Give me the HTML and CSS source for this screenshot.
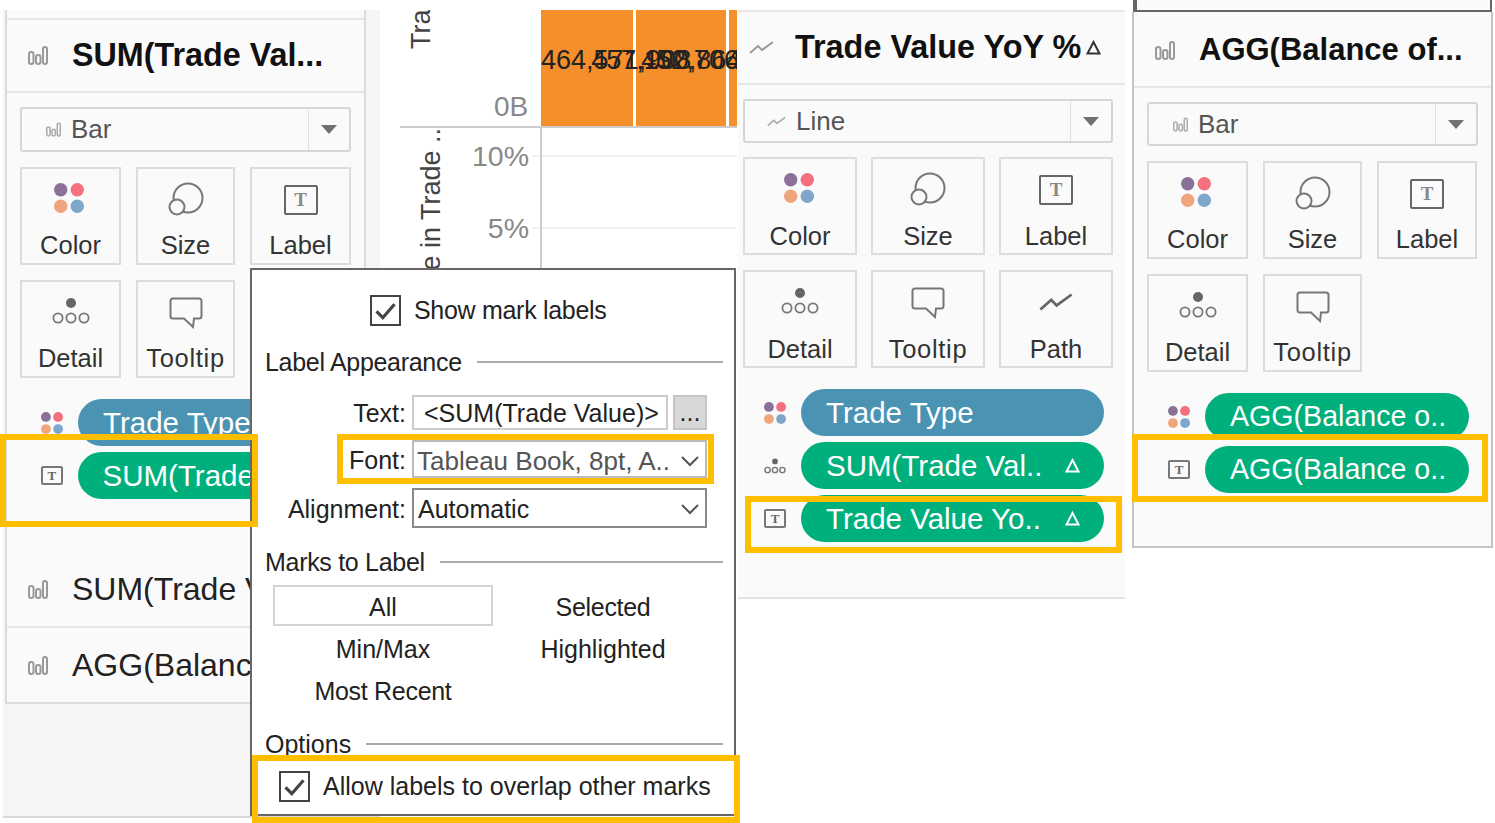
FILE: index.html
```html
<!DOCTYPE html>
<html lang="en">
  <head>
    <meta charset="UTF-8" />
    <title>Tableau mark labels</title>
    <link rel="stylesheet" href="styles.css">
  </head>
  <body>
    <svg class="defs" width="0" height="0">
      <symbol id="i-bar" viewBox="0 0 20 19">
        <rect x="1" y="6" width="4.500" height="12" rx="2.200" />
        <rect x="8" y="9" width="4.500" height="9" rx="2.200" />
        <rect x="15" y="1" width="4" height="17" rx="2" />
      </symbol>
      <symbol id="i-line" viewBox="0 0 25 13">
        <path d="M1 12 L9 5 L13 9 L24 1" />
      </symbol>
      <symbol id="i-color" viewBox="0 0 30 30">
        <circle cx="6.700" cy="6.700" r="6.700" fill="#8b7097" stroke="none" />
        <circle cx="23.300" cy="6.700" r="6.700" fill="#f4707f" stroke="none" />
        <circle cx="6.700" cy="23.300" r="6.700" fill="#f0a57c" stroke="none" />
        <circle cx="23.300" cy="23.300" r="6.700" fill="#7fa7cc" stroke="none" />
      </symbol>
      <symbol id="i-size" viewBox="0 0 36 34">
        <circle cx="20" cy="16" r="14.500" />
        <circle cx="9" cy="25" r="7.500" fill="#fafafa" />
      </symbol>
      <symbol id="i-detail" viewBox="0 0 38 28">
        <circle cx="19" cy="6" r="5" fill="#666" stroke="none" />
        <circle cx="6" cy="21" r="4.600" />
        <circle cx="19" cy="21" r="4.600" />
        <circle cx="32" cy="21" r="4.600" />
      </symbol>
      <symbol id="i-tip" viewBox="0 0 34 32">
        <path d="M4 1.500 H30 Q32.500 1.500 32.500 4 V19 Q32.500 21.500 30 21.500 H25 L24 30 L15 21.500 H4 Q1.500 21.500 1.500 19 V4 Q1.500 1.500 4 1.500 Z" />
      </symbol>
      <symbol id="i-delta" viewBox="0 0 15 15">
        <path d="M7.500 2 L13.500 13.500 H1.500 Z" />
      </symbol>
      <symbol id="i-chev" viewBox="0 0 18 11">
        <path d="M1 1 L9 9 L17 1" />
      </symbol>
      <symbol id="i-check" viewBox="0 0 30 30">
        <path d="M5 16 L12 23 L25 8" />
      </symbol>
    </svg>

    <div class="sidebar"></div>

    <section class="card card-a">
      <div class="card-head">
        <svg class="ico-bar"><use href="#i-bar" /></svg>
        <span>SUM(Trade Val...</span>
      </div>
      <div class="card-body">
        <div class="mark-select">
          <svg class="ico-bar-sm"><use href="#i-bar" /></svg>
          <span class="mark-name">Bar</span>
          <i class="caret"></i>
        </div>
        <div class="mark-grid">
          <div class="mark-btn"><svg class="ico-color"><use href="#i-color" /></svg><span>Color</span></div>
          <div class="mark-btn"><svg class="ico-size"><use href="#i-size" /></svg><span>Size</span></div>
          <div class="mark-btn"><b class="ico-label">T</b><span>Label</span></div>
          <div class="mark-btn"><svg class="ico-detail"><use href="#i-detail" /></svg><span>Detail</span></div>
          <div class="mark-btn"><svg class="ico-tip"><use href="#i-tip" /></svg><span>Tooltip</span></div>
        </div>
        <div class="pills">
          <div class="pill-row">
            <svg class="ico-color-sm"><use href="#i-color" /></svg>
            <div class="pill pill-blue">Trade Type</div>
          </div>
          <div class="pill-row">
            <b class="ico-label-sm">T</b>
            <div class="pill">SUM(Trade Value)</div>
          </div>
        </div>
      </div>
      <div class="card-row">
        <svg class="ico-bar"><use href="#i-bar" /></svg>
        <span>SUM(Trade Value)</span>
      </div>
      <div class="card-row">
        <svg class="ico-bar"><use href="#i-bar" /></svg>
        <span>AGG(Balance of Trade)</span>
      </div>
    </section>

    <section class="chart">
      <div class="chart-top">
        <div class="axis-title-top"><span>Trade Value</span></div>
        <div class="axis-zero">0B</div>
        <div class="bars">
          <div class="bar"></div>
          <div class="bar"></div>
          <div class="bar bar-end"></div>
          <div class="bar-labels">
            <span>464,571,908</span>
            <span>457,190,864</span>
            <span>452,706,693</span>
          </div>
        </div>
      </div>
      <div class="chart-lower">
        <div class="axis-title"><span>Change in Trade ..</span></div>
        <div class="ticks">
          <div class="tick"><span>10%</span><i></i></div>
          <div class="tick"><span>5%</span><i></i></div>
        </div>
      </div>
    </section>

    <section class="dialog">
      <div class="check-row check-show">
        <span class="check"><svg><use href="#i-check" /></svg></span>
        <span class="tight">Show mark labels</span>
      </div>
      <div class="group-title title-first"><span class="tight">Label Appearance</span><i></i></div>
      <div class="form">
        <label>Text:</label>
        <div class="text-ctrl">
          <div class="text-input">&lt;SUM(Trade Value)&gt;</div>
          <div class="dots">...</div>
        </div>
        <label>Font:</label>
        <div class="select select-font"><span>Tableau Book, 8pt, A..</span><svg><use href="#i-chev" /></svg></div>
        <label>Alignment:</label>
        <div class="select select-align"><span>Automatic</span><svg><use href="#i-chev" /></svg></div>
      </div>
      <div class="group-title title-marks"><span class="tight">Marks to Label</span><i></i></div>
      <div class="mark-opts">
        <div class="opt opt-on">All</div>
        <div class="opt tight">Selected</div>
        <div class="opt">Min/Max</div>
        <div class="opt">Highlighted</div>
        <div class="opt tight">Most Recent</div>
      </div>
      <div class="group-title"><span>Options</span><i></i></div>
      <div class="check-row check-overlap">
        <span class="check"><svg><use href="#i-check" /></svg></span>
        <span>Allow labels to overlap other marks</span>
      </div>
    </section>

    <section class="card card-b">
      <div class="card-head">
        <svg class="ico-line"><use href="#i-line" /></svg>
        <span>Trade Value YoY %</span>
        <svg class="ico-delta"><use href="#i-delta" /></svg>
      </div>
      <div class="card-body">
        <div class="mark-select">
          <svg class="ico-line-sm"><use href="#i-line" /></svg>
          <span class="mark-name">Line</span>
          <i class="caret"></i>
        </div>
        <div class="mark-grid">
          <div class="mark-btn"><svg class="ico-color"><use href="#i-color" /></svg><span>Color</span></div>
          <div class="mark-btn"><svg class="ico-size"><use href="#i-size" /></svg><span>Size</span></div>
          <div class="mark-btn"><b class="ico-label">T</b><span>Label</span></div>
          <div class="mark-btn"><svg class="ico-detail"><use href="#i-detail" /></svg><span>Detail</span></div>
          <div class="mark-btn"><svg class="ico-tip"><use href="#i-tip" /></svg><span>Tooltip</span></div>
          <div class="mark-btn"><svg class="ico-path"><use href="#i-line" /></svg><span>Path</span></div>
        </div>
        <div class="pills">
          <div class="pill-row">
            <svg class="ico-color-sm"><use href="#i-color" /></svg>
            <div class="pill pill-blue">Trade Type</div>
          </div>
          <div class="pill-row">
            <svg class="ico-detail-sm"><use href="#i-detail" /></svg>
            <div class="pill"><span>SUM(Trade Val..</span><svg class="pill-delta"><use href="#i-delta" /></svg></div>
          </div>
          <div class="pill-row">
            <b class="ico-label-sm">T</b>
            <div class="pill"><span>Trade Value Yo..</span><svg class="pill-delta"><use href="#i-delta" /></svg></div>
          </div>
        </div>
      </div>
    </section>

    <div class="window-edge"></div>

    <section class="card card-c">
      <div class="card-head">
        <svg class="ico-bar"><use href="#i-bar" /></svg>
        <span>AGG(Balance of...</span>
      </div>
      <div class="card-body">
        <div class="mark-select">
          <svg class="ico-bar-sm"><use href="#i-bar" /></svg>
          <span class="mark-name">Bar</span>
          <i class="caret"></i>
        </div>
        <div class="mark-grid">
          <div class="mark-btn"><svg class="ico-color"><use href="#i-color" /></svg><span>Color</span></div>
          <div class="mark-btn"><svg class="ico-size"><use href="#i-size" /></svg><span>Size</span></div>
          <div class="mark-btn"><b class="ico-label">T</b><span>Label</span></div>
          <div class="mark-btn"><svg class="ico-detail"><use href="#i-detail" /></svg><span>Detail</span></div>
          <div class="mark-btn"><svg class="ico-tip"><use href="#i-tip" /></svg><span>Tooltip</span></div>
        </div>
        <div class="pills">
          <div class="pill-row">
            <svg class="ico-color-sm"><use href="#i-color" /></svg>
            <div class="pill">AGG(Balance o..</div>
          </div>
          <div class="pill-row">
            <b class="ico-label-sm">T</b>
            <div class="pill">AGG(Balance o..</div>
          </div>
        </div>
      </div>
    </section>

    <div class="mark-box box-a"></div>
    <div class="mark-box box-font"></div>
    <div class="mark-box box-overlap"></div>
    <div class="mark-box box-b"></div>
    <div class="mark-box box-c"></div>
  </body>
</html>
```

FILE: styles.css
```css
* {
  margin: 0;
  padding: 0;
  box-sizing: border-box;
}
body {
  position: relative;
  width: 1495px;
  height: 823px;
  overflow: hidden;
  background: #fff;
  color: #333;
  font-family: "Liberation Sans", Arial, sans-serif;
}
.defs {
  position: absolute;
}
svg {
  display: block;
  flex: none;
  fill: none;
  stroke: #777;
  stroke-width: 2;
}

/* pieces of the collage */
.sidebar {
  position: absolute;
  left: 3px;
  top: 10px;
  width: 377px;
  height: 808px;
  background: #f5f5f5;
  border-bottom: 2px solid #d8d8d8;
}
.card {
  position: absolute;
  background: #fafafa;
}
.card-a {
  left: 5px;
  top: 10px;
  width: 361px;
  height: 694px;
  padding-top: 8px;
  border: 2px solid #dcdcdc;
  border-top: 0;
}
.card-b {
  left: 738px;
  top: 10px;
  width: 387px;
  height: 589px;
  border-top: 2px solid #e6e6e6;
  border-bottom: 2px solid #e2e2e2;
}
.card-c {
  left: 1132px;
  top: 12px;
  width: 361px;
  height: 536px;
  border: 2px solid #c4c4c4;
  border-top: 0;
}
.window-edge {
  position: absolute;
  left: 1133px;
  top: -4px;
  width: 359px;
  height: 16px;
  background: #fafafa;
  border: 2px solid #666;
  border-left-width: 4px;
}

/* card header */
.card-head,
.card-row {
  display: flex;
  align-items: center;
  height: 75px;
  border-top: 2px solid #e6e6e6;
  border-bottom: 2px solid #e6e6e6;
  font-size: 32px;
  color: #222;
}
.card-head {
  font-weight: bold;
  color: #111;
}
.card-row {
  border-top: 0;
  margin-top: 0;
  white-space: nowrap;
  overflow: hidden;
}
.card-row:last-child {
  border-bottom: 0;
}
.card-a .card-head,
.card-a .card-row {
  padding-left: 21px;
  gap: 24px;
}
.card-a .card-head {
  font-size: 32.300px;
}
.card-b .card-head {
  height: 73px;
  padding-left: 11px;
  gap: 21px;
  border-top: 0;
  font-size: 32.400px;
}
.card-c .card-head {
  height: 76px;
  padding-left: 21px;
  padding-top: 2px;
  gap: 24px;
  border-top: 0;
  font-size: 31px;
}
.ico-bar {
  width: 20px;
  height: 19px;
  stroke: #999;
}
.ico-line {
  width: 25px;
  height: 13px;
  stroke: #999;
}
.ico-delta {
  width: 15px;
  height: 15px;
  margin-left: -16px;
  stroke: #333;
}

/* card body */
.card-a .card-body {
  height: 460px;
  padding: 14px 13px 0;
}
.card-b .card-body {
  padding: 14px 12px 0 5px;
}
.card-c .card-body {
  padding: 14px 13px 0;
}
.mark-select {
  display: flex;
  align-items: center;
  height: 45px;
  background: #fafafa;
  border: 2px solid #d6d6d6;
  border-radius: 3px;
  color: #555;
  font-size: 26px;
}
.card-b .mark-select,
.card-c .mark-select {
  height: 44px;
}
.ico-bar-sm {
  width: 15px;
  height: 15px;
  margin-left: 24px;
  stroke: #aaa;
}
.ico-line-sm {
  width: 19px;
  height: 11px;
  margin-left: 22px;
  stroke: #aaa;
}
.mark-name {
  flex: 1;
  height: 100%;
  line-height: 41px;
  margin-left: 10px;
  border-right: 1px solid #e0e0e0;
}
.caret {
  width: 40px;
  display: flex;
  justify-content: center;
}
.caret::before {
  content: "";
  border-top: 9px solid #707070;
  border-left: 8px solid transparent;
  border-right: 8px solid transparent;
}
.mark-grid {
  display: grid;
  gap: 15px;
  margin-top: 15px;
}
.card-a .mark-grid {
  grid-template-columns: 101px 99px 101px;
  grid-auto-rows: 98px;
}
.card-b .mark-grid {
  gap: 15px 14px;
  margin-top: 14px;
  grid-template-columns: 114px 114px 114px;
  grid-auto-rows: 98px;
}
.card-c .mark-grid {
  grid-template-columns: 101px 99px 100px;
  grid-auto-rows: 98px;
}
.mark-btn {
  display: flex;
  flex-direction: column;
  align-items: center;
  border: 2px solid #dcdcdc;
  font-size: 25.500px;
  color: #333;
}
.mark-btn svg,
.mark-btn b {
  margin-top: 14px;
  height: 34px;
}
.mark-btn span {
  margin-top: auto;
  line-height: 30px;
  margin-bottom: 3px;
}
.card-b .mark-btn span {
  margin-bottom: 2px;
}
.mark-btn:nth-child(5) span {
  letter-spacing: 0.700px;
}
.mark-btn .ico-color {
  width: 30px;
  height: 30px;
  margin-left: -3px;
}
.mark-btn .ico-size {
  width: 36px;
  margin-top: 13px;
}
.mark-btn .ico-detail {
  width: 38px;
  height: 28px;
  margin-top: 15px;
  stroke-width: 1.800;
}
.mark-btn .ico-tip {
  width: 34px;
  height: 32px;
  margin-top: 15px;
}
.mark-btn .ico-path {
  width: 34px;
  height: 18px;
  margin-top: 21px;
  stroke: #666;
}
.mark-btn .ico-label {
  margin-top: 16px;
}
.ico-label {
  display: flex;
  align-items: center;
  justify-content: center;
  width: 34px;
  height: 30px !important;
  border: 2px solid #666;
  border-radius: 2px;
  font: bold 19px "Liberation Serif", serif;
  color: #888;
}

/* shelf pills */
.pills {
  display: flex;
  flex-direction: column;
  gap: 6px;
  margin-top: 21px;
}
.pill-row {
  display: flex;
  align-items: center;
}
.ico-color-sm {
  width: 22px;
  height: 22px;
}
.ico-detail-sm {
  width: 22px;
  height: 16px;
  stroke-width: 2.500;
}
.ico-label-sm {
  display: flex;
  align-items: center;
  justify-content: center;
  width: 22px;
  height: 19px;
  border: 2px solid #777;
  border-radius: 2px;
  font: bold 13px "Liberation Serif", serif;
  color: #666;
}
.card-a .pill-row,
.card-b .pill-row,
.card-c .pill-row {
  padding-left: 21px;
  gap: 15px;
}
.pill {
  display: flex;
  align-items: center;
  justify-content: space-between;
  height: 47px;
  padding: 0 24px 0 25px;
  border-radius: 24px;
  background: #00b07c;
  color: #fff;
  font-size: 29.500px;
  white-space: nowrap;
  overflow: hidden;
}
.pill-blue {
  background: #4a93b2;
}
.card-a .pill {
  width: 280px;
}
.card-b .pill {
  width: 303px;
}
.card-c .pill {
  width: 264px;
  font-size: 28.600px;
}
.pill-delta {
  width: 15px;
  height: 15px;
  stroke: #fff;
}

/* chart behind the dialog */
.chart {
  position: absolute;
  left: 400px;
  top: 10px;
  width: 337px;
  height: 270px;
  overflow: hidden;
}
.chart-top {
  display: flex;
  height: 118px;
  border-bottom: 2px solid #ccc;
}
.axis-title-top,
.axis-title {
  display: flex;
  font-size: 27px;
  color: #444;
  white-space: nowrap;
}
.axis-title-top {
  width: 60px;
  align-items: flex-end;
  padding: 0 0 77px 6px;
}
.axis-title-top span,
.axis-title span {
  writing-mode: vertical-rl;
  transform: rotate(180deg);
}
.axis-zero {
  width: 81px;
  padding: 81px 0 0 34px;
  font-size: 28px;
  color: #888;
}
.bars {
  position: relative;
  display: flex;
  gap: 3px;
  width: 196px;
}
.bar {
  width: 92px;
  background: #f48f2c;
}
.bar:nth-child(2) {
  width: 90px;
}
.bar-end {
  width: 8px;
}
.bar-labels {
  position: absolute;
  left: 0;
  top: 35px;
  width: 196px;
  height: 32px;
  overflow: hidden;
  display: flex;
  font-size: 27px;
  color: #222;
  white-space: nowrap;
}
.bar-labels span {
  margin-right: -100px;
}
.chart-lower {
  position: relative;
  display: flex;
  height: 150px;
}
.chart-lower::after {
  content: "";
  position: absolute;
  left: 140px;
  top: 0;
  bottom: 0;
  width: 2px;
  background: #ccc;
}
.axis-title {
  width: 60px;
  padding-left: 16px;
  align-items: flex-start;
}
.ticks {
  flex: 1;
  padding-top: 8px;
}
.tick {
  display: flex;
  align-items: center;
  height: 40px;
  margin-bottom: 32px;
  font-size: 28.500px;
  color: #888;
}
.tick span {
  width: 69px;
  text-align: right;
}
.tick i {
  flex: 1;
  height: 2px;
  margin-left: 3px;
  background: #f1f1f1;
}

/* label dialog */
.dialog {
  position: absolute;
  left: 250px;
  top: 268px;
  width: 486px;
  height: 548px;
  padding: 0 11px 0 13px;
  background: #fff;
  border: 2px solid #666;
  font-size: 25px;
  color: #222;
}
.tight {
  letter-spacing: -0.300px;
}
.check-row {
  display: flex;
  align-items: center;
  gap: 13px;
}
.check {
  width: 31px;
  height: 31px;
  border: 2px solid #444;
  background: #fff;
}
.check svg {
  width: 27px;
  height: 27px;
  stroke: #444;
  stroke-width: 3.500;
}
.check-show {
  margin: 25px 0 0 105px;
}
.check-overlap {
  margin: 12px 0 0 14px;
}
.group-title {
  display: flex;
  align-items: center;
  gap: 15px;
  height: 30px;
  margin-top: 18px;
}
.group-title i {
  flex: 1;
  height: 2px;
  background: #aaa;
}
.title-first {
  margin-top: 21px;
}
.title-marks {
  margin-top: 19px;
}
.form {
  display: grid;
  grid-template-columns: 141px 295px;
  column-gap: 6px;
  grid-template-rows: 35px 38px 40px;
  row-gap: 10px;
  align-items: center;
  margin-top: 18px;
}
.form label {
  padding-top: 2px;
  text-align: right;
}
.text-ctrl {
  display: flex;
  gap: 5px;
  height: 35px;
}
.text-input {
  flex: 1;
  padding-left: 10px;
  line-height: 33px;
  border: 2px solid #ccc;
}
.dots {
  width: 34px;
  background: #d8d8d8;
  border: 2px solid #c4c4c4;
  text-align: center;
  line-height: 30px;
}
.select {
  display: flex;
  align-items: center;
  justify-content: space-between;
  height: 100%;
  padding: 2px 6px 0 4px;
  border: 2px solid #888;
}
.select-font {
  padding: 5px 6px 0 3px;
  border-color: #bbb;
  color: #555;
  font-size: 26px;
}
.select svg {
  width: 18px;
  height: 11px;
  stroke: #555;
}
.mark-opts {
  display: grid;
  grid-template-columns: 220px 220px;
  grid-template-rows: 41px 43px 42px;
  align-items: center;
  margin: 8px 0 0 8px;
  text-align: center;
}
.opt {
  padding-top: 3px;
}
.opt-on {
  height: 41px;
  padding-top: 0;
  line-height: 40px;
  border: 2px solid #d4d4d4;
}

/* yellow call-out frames */
.mark-box {
  position: absolute;
  border: 6px solid #ffbf00;
}
.box-a {
  left: 0;
  top: 434px;
  width: 258px;
  height: 93px;
}
.box-font {
  left: 337px;
  top: 434px;
  width: 377px;
  height: 50px;
}
.box-overlap {
  left: 252px;
  top: 755px;
  width: 488px;
  height: 68px;
}
.box-b {
  left: 745px;
  top: 496px;
  width: 377px;
  height: 57px;
}
.box-c {
  left: 1132px;
  top: 434px;
  width: 356px;
  height: 68px;
}
```
